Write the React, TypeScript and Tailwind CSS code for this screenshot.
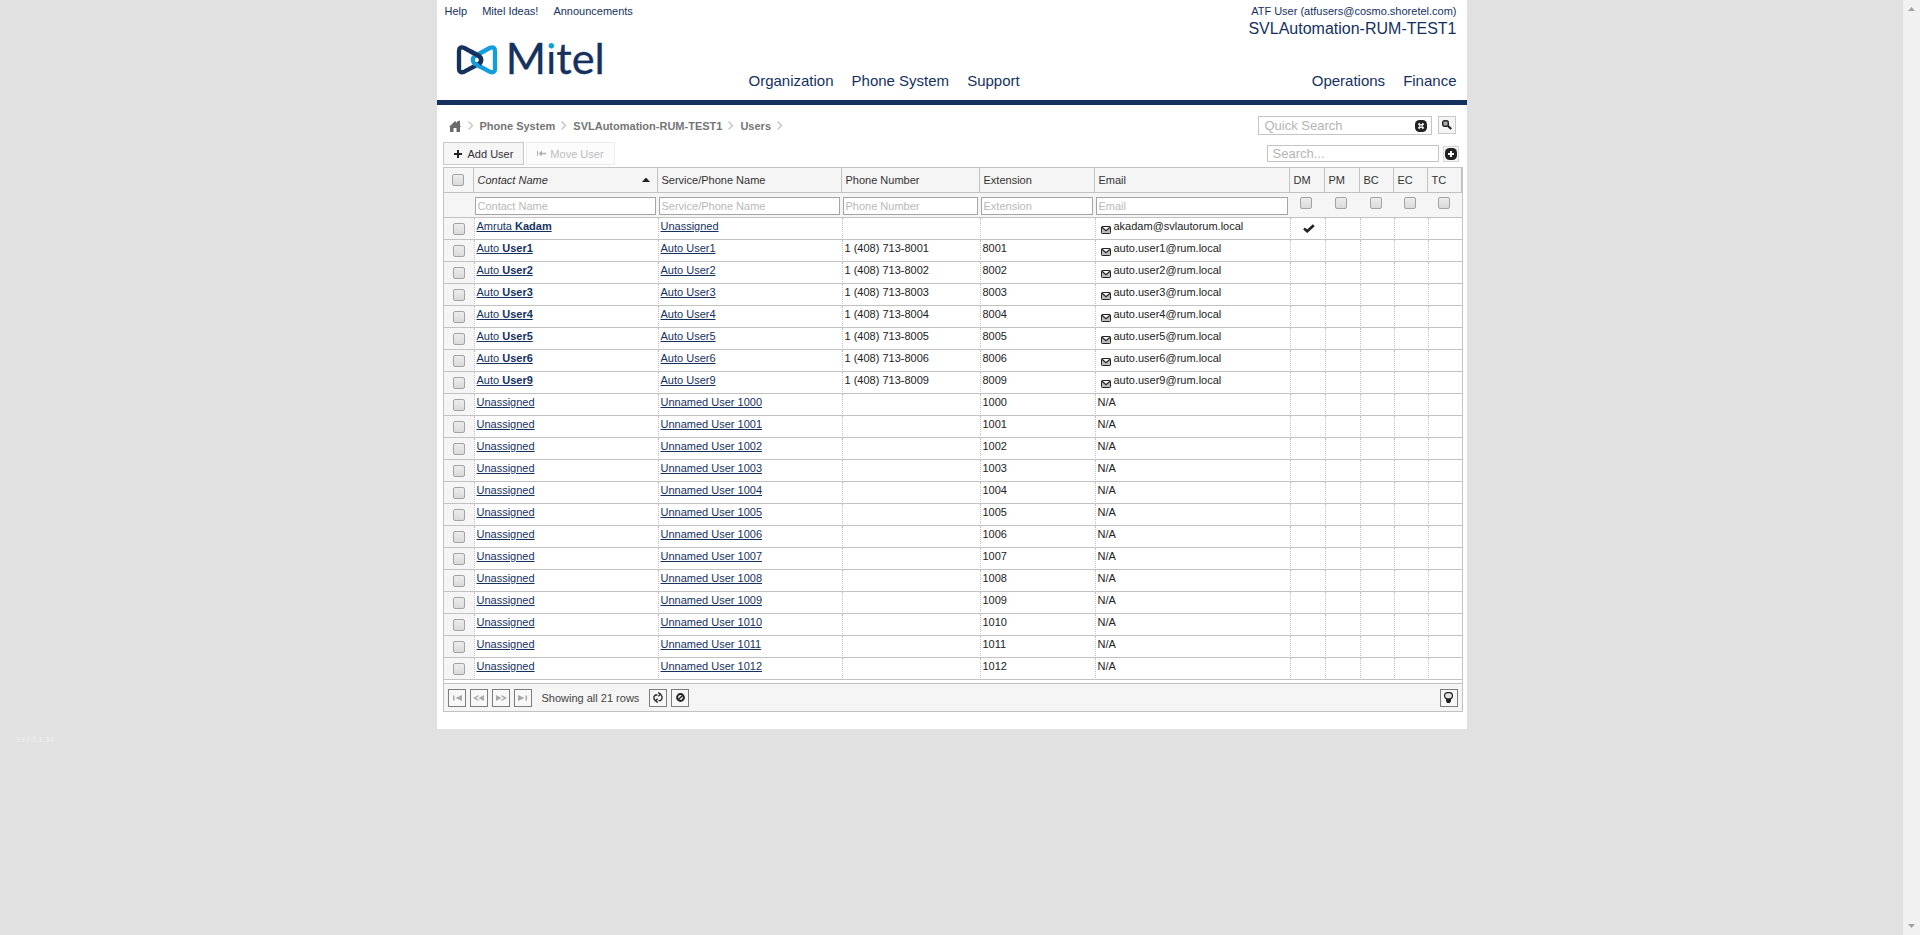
import React from "react";

type User = {
  first?: string;
  last?: string;
  service: string;
  phone?: string;
  ext?: string;
  email?: string;
  dm?: boolean;
};

const autoUsers: User[] = [1, 2, 3, 4, 5, 6, 9].map((n) => ({
  first: "Auto",
  last: `User${n}`,
  service: `Auto User${n}`,
  phone: `1 (408) 713-800${n}`,
  ext: `800${n}`,
  email: `auto.user${n}@rum.local`,
}));

const unnamedUsers: User[] = Array.from({ length: 13 }, (_, i) => ({
  service: `Unnamed User ${1000 + i}`,
  ext: `${1000 + i}`,
}));

const users: User[] = [
  {
    first: "Amruta",
    last: "Kadam",
    service: "Unassigned",
    email: "akadam@svlautorum.local",
    dm: true,
  },
  ...autoUsers,
  ...unnamedUsers,
];

const textColumns = ["Contact Name", "Service/Phone Name", "Phone Number", "Extension", "Email"];
const flagColumns = ["DM", "PM", "BC", "EC", "TC"];

function Logo() {
  return (
    <svg
      width="148"
      height="36"
      viewBox="78 118 444 108"
      className="overflow-visible"
      role="img"
      aria-label="Mitel"
    >
      <defs>
        <linearGradient id="dot" gradientUnits="userSpaceOnUse" x1="0" y1="100" x2="0" y2="200">
          <stop offset="0.46" stopColor="#139ddb" />
          <stop offset="0.46" stopColor="#15325f" />
        </linearGradient>
      </defs>
      <g fill="none" strokeWidth="13" strokeLinejoin="round">
        <path
          stroke="#15325f"
          d="M103 142 L147 166 Q155 171 153 181 Q152 187 146 190 L103 213 Q87 219 87 204 L87 151 Q87 136 103 142 Z"
        />
        <path
          stroke="#139ddb"
          d="M179 142 L135 166 Q127 171 129 181 Q130 187 136 190 L179 213 Q195 219 195 204 L195 151 Q195 136 179 142 Z"
        />
        <path stroke="#15325f" d="M122 152 L147 166 Q155 171 153 181 Q152 186 147 190" />
      </g>
      <text
        x="227"
        y="221"
        fill="#15325f"
        stroke="#15325f"
        strokeWidth="1"
        fontFamily="Lato, sans-serif"
        fontSize="130"
      >
        M
        <tspan fill="url(#dot)" stroke="none">i</tspan>
        tel
      </text>
    </svg>
  );
}

function Check({ label }: { label: string }) {
  return (
    <input
      type="checkbox"
      aria-label={label}
      className="block size-3 appearance-none rounded-xs border border-[#a3a3a3] bg-linear-to-b from-[#ececec] to-[#dadada] checked:bg-[#8fa5c4]"
    />
  );
}

function Chevron() {
  return (
    <svg width="5" height="9" viewBox="0 0 5 9" aria-hidden="true">
      <path d="M0.5 0.5 L4.5 4.5 L0.5 8.5" fill="none" stroke="#c4c4c4" strokeWidth="1.3" />
    </svg>
  );
}

function Envelope() {
  return (
    <svg width="10" height="8" viewBox="0 0 10 8" className="shrink-0" aria-hidden="true">
      <rect x="0.5" y="0.5" width="9" height="7" rx="0.8" fill="#bdbdbd" stroke="#222" />
      <path d="M1 1 H9 L5 4.8 Z" fill="#fff" />
      <path d="M1 1.2 L5 4.8 L9 1.2" fill="none" stroke="#222" strokeWidth="1.2" />
    </svg>
  );
}

function PagerButton({
  label,
  disabled,
  children,
}: {
  label: string;
  disabled?: boolean;
  children: React.ReactNode;
}) {
  return (
    <button
      type="button"
      aria-label={label}
      disabled={disabled}
      className="flex size-[18px] shrink-0 items-center justify-center border border-[#7d7d7d] bg-[#f8f8f8]"
    >
      {children}
    </button>
  );
}

function PagerGlyph({ d }: { d: string }) {
  return (
    <svg width="12" height="6" viewBox="0 0 12 6" fill="#a9a9a9" aria-hidden="true">
      <path d={d} />
    </svg>
  );
}

function Header() {
  return (
    <header className="border-b-5 border-[#15325f] text-[#15325f]">
      <div className="flex h-10 items-start justify-between pt-1 pr-[10px] pl-2">
        <nav aria-label="Help links" className="flex gap-[15px] leading-[14px]">
          <a href="#help">Help</a>
          <a href="#ideas">Mitel Ideas!</a>
          <a href="#announcements">Announcements</a>
        </nav>
        <div className="flex flex-col items-end">
          <a href="#account" className="leading-[14px]">
            ATF User (atfusers@cosmo.shoretel.com)
          </a>
          <span className="text-base leading-[22px]">SVLAutomation-RUM-TEST1</span>
        </div>
      </div>
      <div className="flex h-[60px] items-end pr-[10px] pb-[9px] pl-[19px] text-[15px] leading-5">
        <a href="#home" className="mr-[145px] self-start">
          <Logo />
        </a>
        <nav aria-label="Main" className="flex flex-1 gap-[18px]">
          <a href="#organization">Organization</a>
          <a href="#phone-system">Phone System</a>
          <a href="#support">Support</a>
          <a href="#operations" className="ml-auto">
            Operations
          </a>
          <a href="#finance">Finance</a>
        </nav>
      </div>
    </header>
  );
}

function Toolbar() {
  return (
    <div className="pt-[11px]">
      <div className="flex items-center justify-between pr-[11px] pl-3">
        <nav aria-label="Breadcrumb" className="flex items-center font-bold text-[#757575]">
          <a href="#home" aria-label="Home" className="mr-[7px]">
            <svg width="12" height="12" viewBox="0 0 12 12" fill="#6b6b6b" aria-hidden="true">
              <path d="M6 1 L8 3 V1.5 L11 0.5 V5.5 L12 7 H11 V12 H7.5 V8 H4.5 V12 H1 V7 H0 Z" />
            </svg>
          </a>
          <Chevron />
          <a href="#phone-system" className="mr-1.5 ml-[7px]">
            Phone System
          </a>
          <Chevron />
          <a href="#account" className="mr-1.5 ml-[7px]">
            SVLAutomation-RUM-TEST1
          </a>
          <Chevron />
          <a href="#users" className="mr-1.5 ml-[7px]">
            Users
          </a>
          <Chevron />
        </nav>
        <div className="flex gap-1.5">
          <div className="flex h-[19px] w-[174px] items-center border border-[#c4c4c4] pr-1 pl-1.5">
            <input
              type="text"
              aria-label="Quick Search"
              placeholder="Quick Search"
              className="min-w-0 flex-1 text-[13px] leading-4 outline-none placeholder:text-[#b5b5b5]"
            />
            <button type="button" aria-label="Clear quick search">
              <svg width="12" height="12" viewBox="0 0 12 12" aria-hidden="true">
                <rect width="12" height="12" rx="4.5" fill="#222" />
                <path d="M3.5 3.5 L8.5 8.5 M8.5 3.5 L3.5 8.5" stroke="#fff" strokeWidth="1.8" />
                <rect x="5.3" y="5.3" width="1.4" height="1.4" fill="#222" />
              </svg>
            </button>
          </div>
          <button
            type="button"
            aria-label="Run quick search"
            className="flex size-[18px] items-center justify-center border border-[#c9c9c9] bg-[#f5f5f5]"
          >
            <svg width="10" height="10" viewBox="0 0 10 10" aria-hidden="true">
              <rect x="0.7" y="0.7" width="5.6" height="5.6" rx="1.8" fill="#aaa" stroke="#222" strokeWidth="1.4" />
              <path d="M6 6 L9.3 9" stroke="#222" strokeWidth="2.2" />
            </svg>
          </button>
        </div>
      </div>
      <div className="mt-[7px] flex items-center gap-0.5 pr-2 pl-1.5">
        <button
          type="button"
          className="flex h-[23px] items-center gap-1.5 border border-[#c9c9c9] bg-[#f6f6f6] px-[10px] text-[#333]"
        >
          <svg width="8" height="8" viewBox="0 0 8 8" className="mt-px" aria-hidden="true">
            <path d="M4 0 V8 M0 4 H8" stroke="#222" strokeWidth="2" />
          </svg>
          Add User
        </button>
        <button
          type="button"
          disabled
          className="flex h-[23px] items-center gap-1 border border-[#ebebeb] bg-[#fcfcfc] px-[10px] text-[#bdbdbd]"
        >
          <svg width="9" height="7" viewBox="0 0 9 7" fill="#b0b0b0" aria-hidden="true">
            <path d="M0 1 H1 V6 H0 Z M1.5 3.5 L5 0.5 V2.7 H9 V4.3 H5 V6.5 Z" />
          </svg>
          Move User
        </button>
        <input
          type="text"
          aria-label="Search"
          placeholder="Search..."
          className="ml-auto h-[17px] w-[172px] border border-[#c4c4c4] px-[5px] text-[13px] leading-4 outline-none placeholder:text-[#b5b5b5]"
        />
        <button
          type="button"
          aria-label="Add search condition"
          className="ml-0.5 flex size-4 items-center justify-center border border-[#d6d6d6] bg-[#f5f5f5]"
        >
          <svg width="12" height="12" viewBox="0 0 12 12" className="shrink-0" aria-hidden="true">
            <rect width="12" height="12" rx="4.5" fill="#222" />
            <path d="M6 3 V9 M3 6 H9" stroke="#fff" strokeWidth="2" />
          </svg>
        </button>
      </div>
    </div>
  );
}

function UserRow({ user }: { user: User }) {
  const cell = "h-[22px] border-b border-l border-b-[#c2c2c2] border-l-[#c2c2c2] [border-left-style:dotted] pl-0.5 align-top leading-4";
  const name = user.last ? `${user.first} ${user.last}` : user.service;
  return (
    <tr>
      <td className="h-[22px] border-b border-[#c2c2c2] bg-[#f5f5f5] pt-[5px] pl-[9px] align-top">
        <Check label={`Select ${name}`} />
      </td>
      <td className={cell}>
        <a href="#user" className="text-[#15325f] underline">
          {user.last ? (
            <>
              {user.first} <b>{user.last}</b>
            </>
          ) : (
            "Unassigned"
          )}
        </a>
      </td>
      <td className={cell}>
        <a href="#service" className="text-[#15325f] underline">
          {user.service}
        </a>
      </td>
      <td className={cell}>{user.phone}</td>
      <td className={cell}>{user.ext}</td>
      <td className={cell}>
        {user.email ? (
          <span className="flex items-end gap-[3px] pl-[3px]">
            <Envelope />
            {user.email}
          </span>
        ) : (
          "N/A"
        )}
      </td>
      {flagColumns.map((flag) => (
        <td key={flag} className={cell}>
          {flag === "DM" && user.dm && (
            <svg width="12" height="9" viewBox="0 0 12 9" className="mx-auto mt-1.5" role="img" aria-label="Yes">
              <path d="M1 4.5 L4.2 7.3 L10.8 1.2" fill="none" stroke="#222" strokeWidth="2.6" />
            </svg>
          )}
        </td>
      ))}
    </tr>
  );
}

function UserTable() {
  return (
    <table className="w-full table-fixed border-separate border-spacing-0 text-left text-[#222]">
      <colgroup>
        <col className="w-[30px]" />
        <col className="w-[184px]" />
        <col className="w-[184px]" />
        <col className="w-[138px]" />
        <col className="w-[115px]" />
        <col />
        <col className="w-[35px]" />
        <col className="w-[35px]" />
        <col className="w-[34px]" />
        <col className="w-[34px]" />
        <col className="w-[34px]" />
      </colgroup>
      <thead className="bg-[#f5f5f5]">
        <tr>
          <th className="h-[25px] border-r border-b border-[#c2c2c2] pl-2">
            <Check label="Select all users" />
          </th>
          {textColumns.map((title, i) => (
            <th key={title} className="h-[25px] border-r border-b border-[#c2c2c2] px-1 font-normal text-[#333]">
              {i === 0 ? (
                <span className="flex items-center justify-between pr-[3px] italic">
                  {title}
                  <svg width="8" height="4" viewBox="0 0 8 4" aria-hidden="true">
                    <path d="M0 4 L3.5 0 H4.5 L8 4 Z" fill="#222" />
                  </svg>
                </span>
              ) : (
                title
              )}
            </th>
          ))}
          {flagColumns.map((title) => (
            <th key={title} className="h-[25px] border-r border-b border-[#c2c2c2] pl-1 font-normal text-[#333]">
              {title}
            </th>
          ))}
        </tr>
        <tr>
          <td className="h-[25px] border-b border-[#c2c2c2]" />
          {textColumns.map((title) => (
            <td key={title} className="h-[25px] border-b border-[#c2c2c2] pt-1 pr-0.5 pl-px align-top">
              <input
                type="text"
                aria-label={`Filter by ${title}`}
                placeholder={title}
                className="block h-[18px] w-full border border-[#a5a5a5] bg-white px-0.5 outline-none placeholder:text-[#b8b8b8]"
              />
            </td>
          ))}
          {flagColumns.map((title) => (
            <td key={title} className="h-[25px] border-b border-[#c2c2c2] pt-1 pl-2.5 align-top">
              <Check label={`Filter by ${title}`} />
            </td>
          ))}
        </tr>
      </thead>
      <tbody>
        {users.map((user) => (
          <UserRow key={user.service + (user.last ?? "")} user={user} />
        ))}
      </tbody>
    </table>
  );
}

function Footer() {
  return (
    <div className="mt-[3px] flex h-7 items-center gap-1 border-t border-[#c2c2c2] bg-[#f5f5f5] px-1 text-[#444]">
      <PagerButton label="First page" disabled>
        <PagerGlyph d="M2 0.5 H3.5 V5.5 H2 Z M4.5 3 L11 0 V6 Z" />
      </PagerButton>
      <PagerButton label="Previous page" disabled>
        <PagerGlyph d="M0 3 L5.5 0 V1.5 L3 3 L5.5 4.5 V6 Z M5.5 3 L11 0 V6 Z" />
      </PagerButton>
      <PagerButton label="Next page" disabled>
        <PagerGlyph d="M12 3 L6.5 0 V1.5 L9 3 L6.5 4.5 V6 Z M6.5 3 L1 0 V6 Z" />
      </PagerButton>
      <PagerButton label="Last page" disabled>
        <PagerGlyph d="M10 0.5 H8.5 V5.5 H10 Z M7.5 3 L1 0 V6 Z" />
      </PagerButton>
      <span className="px-1.5">Showing all 21 rows</span>
      <PagerButton label="Refresh">
        <svg width="10" height="11" viewBox="0 0 10 11" fill="none" stroke="#222" strokeWidth="1.3" aria-hidden="true">
          <path d="M4.5 3 H2.6 L1 4.6 V7 L2.6 9 M5.5 8.6 H7.4 L9 6.8 V4.4 L7.4 2" />
          <path d="M5.2 0.5 L7.4 2.2 L5.4 4.4 M4.8 6.6 L2.6 8.8 L4.8 10.6" />
        </svg>
      </PagerButton>
      <PagerButton label="Clear filters">
        <svg width="9" height="9" viewBox="0 0 9 9" fill="none" stroke="#222" strokeWidth="2" aria-hidden="true">
          <circle cx="4.5" cy="4.5" r="3.4" />
          <path d="M2.5 6.5 L6.5 2.5" strokeWidth="1.5" />
        </svg>
      </PagerButton>
      <div className="ml-auto">
        <PagerButton label="Tips">
          <svg width="9" height="11" viewBox="0 0 9 11" aria-hidden="true">
            <rect x="0.6" y="0.6" width="7.8" height="6.2" rx="2.8" fill="#e2e2e2" stroke="#222" strokeWidth="1.2" />
            <path d="M2 7 H7 V9 L6 11 H3 L2 9 Z" fill="#222" />
          </svg>
        </PagerButton>
      </div>
    </div>
  );
}

export default function App() {
  return (
    <div className="flex min-h-screen bg-[#e1e1e1] font-['Liberation_Sans',Arial,sans-serif] text-[11px] leading-[14px]">
      <div className="min-w-0 flex-1">
        <main className="mx-auto w-full max-w-[1030px] bg-white pb-[17px]">
          <Header />
          <Toolbar />
          <section aria-label="Users" className="mt-0.5 mr-1 ml-1.5 border border-t border-[#c2c2c2]">
            <UserTable />
            <Footer />
          </section>
        </main>
        <p className="mt-[5px] pl-4 text-[8px] leading-3 text-[#f0f0f0]">19.03.1.34</p>
      </div>
      <div
        aria-hidden="true"
        className="sticky top-0 flex h-screen w-[17px] shrink-0 flex-col items-center justify-between bg-[#f1f1f1] py-[7px]"
      >
        <svg width="7" height="4" viewBox="0 0 7 4">
          <path d="M0 4 L3.5 0 L7 4 Z" fill="#a3a3a3" />
        </svg>
        <svg width="7" height="4" viewBox="0 0 7 4">
          <path d="M0 0 L3.5 4 L7 0 Z" fill="#a3a3a3" />
        </svg>
      </div>
    </div>
  );
}
